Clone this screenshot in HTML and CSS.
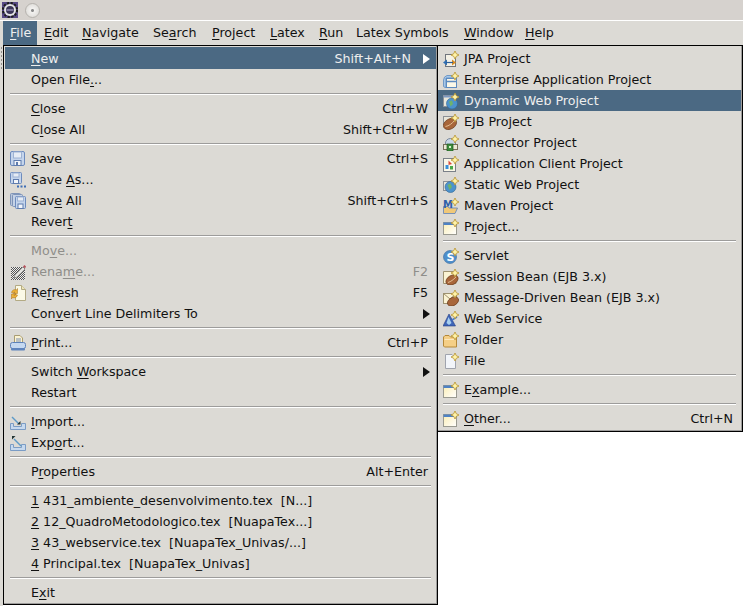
FILE: index.html
```html
<!DOCTYPE html>
<html lang="en">
<head>
    <meta charset="UTF-8">
    <title>File menu</title>
    <link rel="stylesheet" href="styles.css">
</head>
<body>
    <svg class="defs" xmlns="http://www.w3.org/2000/svg">
        <defs>
            <pattern id="dither" width="2" height="2" patternUnits="userSpaceOnUse">
                <rect width="2" height="2" fill="#eee"/>
                <rect width="1" height="1" fill="#555"/>
                <rect x="1" y="1" width="1" height="1" fill="#555"/>
            </pattern>
            <linearGradient id="pale" x1="0" y1="0" x2="1" y2="1">
                <stop offset="0" stop-color="#fbeeb4"/>
                <stop offset="1" stop-color="#ffffff"/>
            </linearGradient>
            <symbol id="star" viewBox="0 0 16 16">
                <path d="M12 0 L13.300 2.700 L16 4 L13.300 5.300 L12 8 L10.700 5.300 L8 4 L10.700 2.700 Z" fill="#fff3a8" stroke="#b8922e" stroke-width=".8"/>
            </symbol>
            <symbol id="win" viewBox="0 0 16 16">
                <rect x=".5" y="3.500" width="13" height="12" fill="url(#pale)" stroke="#9a9a90"/>
                <rect x=".5" y="3.500" width="13" height="2.500" fill="#4f82c4"/>
                <use href="#star"/>
            </symbol>
            <symbol id="save" viewBox="0 0 16 16">
                <rect x=".5" y=".5" width="14" height="14" rx="1.500" fill="#c5d5ec" stroke="#6d8bbd"/>
                <rect x="3.500" y="1" width="8" height="6" fill="#e6ecf5" stroke="#9db2d3"/>
                <rect x="4" y="9.500" width="7" height="5" fill="#f2f5fa" stroke="#5f7cae"/>
                <rect x="6" y="11" width="2" height="3" fill="#5f7cae"/>
            </symbol>
            <symbol id="saveas" viewBox="0 0 16 16">
                <rect x=".5" y=".5" width="11" height="11" rx="1" fill="#c5d5ec" stroke="#6d8bbd"/>
                <rect x="3" y="1" width="6" height="4" fill="#e6ecf5" stroke="#9db2d3"/>
                <rect x="3.500" y="7.500" width="5" height="4" fill="#f2f5fa" stroke="#5f7cae"/>
                <path d="M7 13.500h2v2H7zM10.500 13.500h2v2h-2zM14 13.500h2v2h-2z" fill="#3d6db5"/>
            </symbol>
            <symbol id="saveall" viewBox="0 0 16 16">
                <rect x=".5" y=".5" width="10" height="12" rx="1" fill="#b9c6da" stroke="#7f94b8"/>
                <rect x="2.500" y="1.500" width="10" height="12" rx="1" fill="#c5d2e6" stroke="#7f94b8"/>
                <rect x="5.500" y="3.500" width="10" height="12" rx="1" fill="#c5d5ec" stroke="#6d8bbd"/>
                <rect x="7.500" y="4" width="6" height="4" fill="#e6ecf5" stroke="#9db2d3"/>
                <rect x="8" y="11" width="5" height="4.500" fill="#f2f5fa" stroke="#5f7cae"/>
            </symbol>
            <symbol id="rename" viewBox="0 0 16 16">
                <rect x="1" y="3" width="14" height="13" fill="url(#dither)"/>
                <path d="M5 11 L13 3 L15 5 L7 13 L4 14 Z" fill="#e4e4e0" stroke="#777" stroke-width=".7"/>
                <path d="M13 2.500 L14.500 1 L16 2.500 L15 4.500 Z" fill="#b5505a"/>
            </symbol>
            <symbol id="refresh" viewBox="0 0 16 16">
                <path d="M5.500 .5 H11.500 L15.500 4.500 V15.500 H5.500 Z" fill="#fbf9e6" stroke="#b3aa84"/>
                <path d="M11.500 .5 V4.500 H15.500" fill="#efe6b8" stroke="#b3aa84"/>
                <path d="M1.500 7.500 A3.500 3.500 0 0 1 6.500 5 L7.500 3.500 V8.500 H3.500 L5 7 A1.500 1.500 0 0 0 3.500 8 Z" fill="#edb23a" stroke="#a8701a" stroke-width=".5"/>
                <path d="M7.500 10 A3.500 3.500 0 0 1 2.500 12.500 L1.500 14 V9 H5.500 L4 10.500 A1.500 1.500 0 0 0 5.500 9.500 Z" fill="#edb23a" stroke="#a8701a" stroke-width=".5"/>
            </symbol>
            <symbol id="print" viewBox="0 0 16 16">
                <path d="M4.500 .5 H10 L12.500 3 V8 H4.500 Z" fill="#fbf3d2" stroke="#a99c72"/>
                <path d="M6 4h5M6 6h5" stroke="#7d8fb0"/>
                <rect x=".5" y="7.500" width="15" height="6" rx="2" fill="#c5d8f0" stroke="#5d82ba"/>
                <rect x="1" y="13" width="14" height="2.500" rx="1" fill="#5f84bd"/>
            </symbol>
            <symbol id="import" viewBox="0 0 16 16">
                <path d="M.5 9.500 H3.500 V12.500 H11.500 V9.500 H15.500 V15.500 H.5 Z" fill="#c7d9ee" stroke="#7b9cc5"/>
                <path d="M2 3 L9 10" stroke="#5d9ac8" stroke-width="1.400"/>
                <path d="M7 10.500 H10.500 V7 Z" fill="#233"/>
            </symbol>
            <symbol id="export" viewBox="0 0 16 16">
                <path d="M.5 9.500 H3.500 V12.500 H11.500 V9.500 H15.500 V15.500 H.5 Z" fill="#c7d9ee" stroke="#7b9cc5"/>
                <path d="M4 4 L11 11" stroke="#5d9ac8" stroke-width="1.400"/>
                <path d="M2 1 H5.500 L2 4.500 Z" fill="#233"/>
            </symbol>
            <symbol id="jpa" viewBox="0 0 16 16">
                <rect x="2.500" y="3.500" width="10" height="12" fill="#f4f1e6" stroke="#70757c"/>
                <path d="M0 11.500 L4 8.500 V14.500 Z" fill="#2f6fb5"/>
                <path d="M13 11.500 L9 8.500 V14.500 Z" fill="#d68a20"/>
                <path d="M3 11.500 H10" stroke="#2f5f95" stroke-width="1.200"/>
                <use href="#star"/>
            </symbol>
            <symbol id="ear" viewBox="0 0 16 16">
                <path d="M.5 8 A5 5 0 0 1 4 3.500 H13.500 V6 H3 V15.500 H2 A2 2 0 0 1 .5 13 Z" fill="#a8c8e8" stroke="#5d8bc0" stroke-width=".8"/>
                <rect x="3.500" y="6.500" width="10" height="9" fill="#fbf8e8" stroke="#5d8bc0"/>
                <path d="M3.500 9.500 H13.500" stroke="#5d8bc0" stroke-width="1.500"/>
                <use href="#star"/>
            </symbol>
            <symbol id="dyn" viewBox="0 0 16 16">
                <rect x=".5" y="2.500" width="12" height="11" fill="#e8e6da" stroke="#8c9096"/>
                <rect x=".5" y="2.500" width="12" height="2" fill="#7d98c0"/>
                <circle cx="9" cy="10.500" r="5.500" fill="#4d93cc" stroke="#2f6596" stroke-width=".6"/>
                <path d="M6 8.500 L9 7.500 L10 11 L7.500 13.500 Z" fill="#6fb36b"/>
                <use href="#star"/>
            </symbol>
            <symbol id="ejb" viewBox="0 0 16 16">
                <rect x=".5" y="2.500" width="10" height="8" fill="#e8e6da" stroke="#8c9096"/>
                <ellipse cx="7" cy="10" rx="7" ry="5" transform="rotate(-30 7 10)" fill="#a8663a" stroke="#6c3d1e" stroke-width=".7"/>
                <path d="M2.500 12.500 C6 12 9 9.500 11.500 6.500" stroke="#e3bd92" fill="none"/>
                <use href="#star"/>
            </symbol>
            <symbol id="conn" viewBox="0 0 16 16">
                <path d="M2.500 8 A5 4.500 0 0 1 12.500 8 V9.500 H2.500 Z" fill="#c8d6e6" stroke="#77879c"/>
                <rect x=".5" y="9.500" width="14" height="5" fill="#ece8d5" stroke="#77705a"/>
                <rect x="4" y="9" width="6" height="7" fill="#3e8c3e" stroke="#1e5a1e" stroke-width=".7"/>
                <rect x="6" y="11" width="2" height="2" fill="#d8f0c8"/>
                <use href="#star"/>
            </symbol>
            <symbol id="client" viewBox="0 0 16 16">
                <rect x=".5" y="2.500" width="12" height="13" fill="#faf7e8" stroke="#7a8088"/>
                <path d="M5.500 4.500 L9 8 L5.500 9 Z" fill="#d94a3a"/>
                <rect x="2.500" y="9" width="3" height="4" fill="#3a8fd8"/>
                <rect x="7" y="10" width="3" height="3.500" fill="#48a848"/>
                <use href="#star"/>
            </symbol>
            <symbol id="staticweb" viewBox="0 0 16 16">
                <rect x=".5" y="4.500" width="8" height="9" fill="#e8e6da" stroke="#8c9096"/>
                <circle cx="7.500" cy="10" r="5.500" fill="#4d93cc" stroke="#2f6596" stroke-width=".6"/>
                <path d="M4.500 8 L7.500 6.500 L9 10 L6.500 13 Z" fill="#6fb36b"/>
                <use href="#star"/>
            </symbol>
            <symbol id="maven" viewBox="0 0 16 16">
                <path d="M.5 8.500 H5 L6 10 H14.500 L12 15.500 H.5 Z" fill="#f0c878" stroke="#5d82ba" stroke-width=".8"/>
                <text x="0" y="9.500" class="icon-m">M</text>
                <use href="#star"/>
            </symbol>
            <symbol id="servlet" viewBox="0 0 16 16">
                <circle cx="7" cy="9" r="6.500" fill="#4f8fcb" stroke="#34689e" stroke-width=".6"/>
                <text x="3.500" y="13" class="icon-s">S</text>
                <use href="#star"/>
            </symbol>
            <symbol id="session" viewBox="0 0 16 16">
                <path d="M.5 2.500 H10 L13 5.500 V14.500 H.5 Z" fill="#fbf3d2" stroke="#9e9270"/>
                <ellipse cx="9" cy="11" rx="6.500" ry="4.500" transform="rotate(-30 9 11)" fill="#a8663a" stroke="#6c3d1e" stroke-width=".7"/>
                <path d="M5 13.500 C8 12.500 10 11 13 8" stroke="#e3bd92" fill="none"/>
                <use href="#star"/>
            </symbol>
            <symbol id="mdb" viewBox="0 0 16 16">
                <rect x=".5" y="3.500" width="13" height="10" fill="#fbf3d2" stroke="#9e9270"/>
                <path d="M.5 3.500 L7 9 L13.500 3.500" fill="none" stroke="#9e9270"/>
                <ellipse cx="10" cy="11.500" rx="6" ry="4" transform="rotate(-30 10 11.500)" fill="#a8663a" stroke="#6c3d1e" stroke-width=".7"/>
                <use href="#star"/>
            </symbol>
            <symbol id="ws" viewBox="0 0 16 16">
                <path d="M0 15 L6 3 L12.500 15 Z" fill="#3f66b8" stroke="#263f85" stroke-width=".6"/>
                <path d="M5.500 6 L8.500 12 L6 14 L3.500 12 Z" fill="#a8d0f0"/>
                <path d="M9 9 L14 6" stroke="#4d7cc8" stroke-width="1.500"/>
                <use href="#star"/>
            </symbol>
            <symbol id="folder" viewBox="0 0 16 16">
                <path d="M.5 5 L2 3.500 H6 L7.500 5 H13.500 V15 H1.500 L.5 14 Z" fill="#f5cf86" stroke="#b5893a"/>
                <path d="M1.500 7.500 H13" stroke="#fbe8bf"/>
                <use href="#star"/>
            </symbol>
            <symbol id="newfile" viewBox="0 0 16 16">
                <path d="M2.500 1.500 H9 L12.500 5 V15.500 H2.500 Z" fill="#f2f5fa" stroke="#a0a4ae"/>
                <use href="#star"/>
            </symbol>
        </defs>
    </svg>

    <div class="titlebar">
        <svg class="appicon" viewBox="0 0 16 16">
            <rect width="16" height="16" fill="#584a86"/>
            <circle cx="8" cy="8" r="6.800" fill="none" stroke="#1c1c1c" stroke-width="2.600" stroke-dasharray="2.200 1.400"/>
            <circle cx="8" cy="8" r="6" fill="#e4e4e4"/>
            <circle cx="8" cy="8" r="4" fill="#3c3658"/>
            <rect x="4.500" y="7.400" width="7" height="1.200" fill="#a8a0c8"/>
        </svg>
        <span class="winbtn"></span>
    </div>

    <nav class="menubar">
        <span class="top current"><u>F</u>ile</span>
        <span class="top"><u>E</u>dit</span>
        <span class="top"><u>N</u>avigate</span>
        <span class="top">Se<u>a</u>rch</span>
        <span class="top"><u>P</u>roject</span>
        <span class="top"><u>L</u>atex</span>
        <span class="top"><u>R</u>un</span>
        <span class="top">Latex Symbols</span>
        <span class="top"><u>W</u>indow</span>
        <span class="top"><u>H</u>elp</span>
    </nav>

    <main class="stage">
        <div class="grip"></div>
        <div class="menu file-menu">
            <div class="item on"><span class="ico"></span><span><u>N</u>ew</span><span class="key key-sub">Shift+Alt+N</span><i class="arrow"></i></div>
            <div class="item"><span class="ico"></span><span>Open File<u>.</u>..</span></div>
            <div class="sep"></div>
            <div class="item"><span class="ico"></span><span><u>C</u>lose</span><span class="key">Ctrl+W</span></div>
            <div class="item"><span class="ico"></span><span>C<u>l</u>ose All</span><span class="key">Shift+Ctrl+W</span></div>
            <div class="sep"></div>
            <div class="item"><svg class="ico"><use href="#save"/></svg><span><u>S</u>ave</span><span class="key">Ctrl+S</span></div>
            <div class="item"><svg class="ico"><use href="#saveas"/></svg><span>Save <u>A</u>s...</span></div>
            <div class="item"><svg class="ico"><use href="#saveall"/></svg><span>Sav<u>e</u> All</span><span class="key">Shift+Ctrl+S</span></div>
            <div class="item"><span class="ico"></span><span>Rever<u>t</u></span></div>
            <div class="sep"></div>
            <div class="item off"><span class="ico"></span><span>Mo<u>v</u>e...</span></div>
            <div class="item off"><svg class="ico"><use href="#rename"/></svg><span>Rena<u>m</u>e...</span><span class="key">F2</span></div>
            <div class="item"><svg class="ico"><use href="#refresh"/></svg><span>Re<u>f</u>resh</span><span class="key">F5</span></div>
            <div class="item"><span class="ico"></span><span>Con<u>v</u>ert Line Delimiters To</span><i class="arrow push"></i></div>
            <div class="sep"></div>
            <div class="item"><svg class="ico"><use href="#print"/></svg><span><u>P</u>rint...</span><span class="key">Ctrl+P</span></div>
            <div class="sep"></div>
            <div class="item"><span class="ico"></span><span>Switch <u>W</u>orkspace</span><i class="arrow push"></i></div>
            <div class="item"><span class="ico"></span><span>Restart</span></div>
            <div class="sep"></div>
            <div class="item"><svg class="ico"><use href="#import"/></svg><span><u>I</u>mport...</span></div>
            <div class="item"><svg class="ico"><use href="#export"/></svg><span>Exp<u>o</u>rt...</span></div>
            <div class="sep"></div>
            <div class="item"><span class="ico"></span><span>P<u>r</u>operties</span><span class="key">Alt+Enter</span></div>
            <div class="sep"></div>
            <div class="item"><span class="ico"></span><span><u>1</u> 431_ambiente_desenvolvimento.tex  [N...]</span></div>
            <div class="item"><span class="ico"></span><span><u>2</u> 12_QuadroMetodologico.tex  [NuapaTex...]</span></div>
            <div class="item"><span class="ico"></span><span><u>3</u> 43_webservice.tex  [NuapaTex_Univas/...]</span></div>
            <div class="item"><span class="ico"></span><span><u>4</u> Principal.tex  [NuapaTex_Univas]</span></div>
            <div class="sep"></div>
            <div class="item"><span class="ico"></span><span>E<u>x</u>it</span></div>
        </div>

        <div class="menu new-menu">
            <div class="item"><svg class="ico"><use href="#jpa"/></svg><span>JPA Project</span></div>
            <div class="item"><svg class="ico"><use href="#ear"/></svg><span>Enterprise Application Project</span></div>
            <div class="item on"><svg class="ico"><use href="#dyn"/></svg><span>Dynamic Web Project</span></div>
            <div class="item"><svg class="ico"><use href="#ejb"/></svg><span>EJB Project</span></div>
            <div class="item"><svg class="ico"><use href="#conn"/></svg><span>Connector Project</span></div>
            <div class="item"><svg class="ico"><use href="#client"/></svg><span>Application Client Project</span></div>
            <div class="item"><svg class="ico"><use href="#staticweb"/></svg><span>Static Web Project</span></div>
            <div class="item"><svg class="ico"><use href="#maven"/></svg><span>Maven Project</span></div>
            <div class="item"><svg class="ico"><use href="#win"/></svg><span>P<u>r</u>oject...</span></div>
            <div class="sep"></div>
            <div class="item"><svg class="ico"><use href="#servlet"/></svg><span>Servlet</span></div>
            <div class="item"><svg class="ico"><use href="#session"/></svg><span>Session Bean (EJB 3.x)</span></div>
            <div class="item"><svg class="ico"><use href="#mdb"/></svg><span>Message-Driven Bean (EJB 3.x)</span></div>
            <div class="item"><svg class="ico"><use href="#ws"/></svg><span>Web Service</span></div>
            <div class="item"><svg class="ico"><use href="#folder"/></svg><span>Folder</span></div>
            <div class="item"><svg class="ico"><use href="#newfile"/></svg><span>File</span></div>
            <div class="sep"></div>
            <div class="item"><svg class="ico"><use href="#win"/></svg><span>E<u>x</u>ample...</span></div>
            <div class="sep"></div>
            <div class="item"><svg class="ico"><use href="#win"/></svg><span><u>O</u>ther...</span><span class="key">Ctrl+N</span></div>
        </div>
    </main>
</body>
</html>
```

FILE: styles.css
```css
html, body{
    margin: 0;
    height: 100%;
    overflow: hidden;
}
body{
    display: flex;
    flex-direction: column;
    background-color: white;
    color: #111;
    font-family: "DejaVu Sans", sans-serif;
    font-size: 12.67px;
}
u{
    text-decoration-thickness: 1px;
    text-underline-offset: 2px;
    text-decoration-skip-ink: none;
}
.defs{
    position: absolute;
    width: 0;
    height: 0;
}
.icon-m{
    font-family: "DejaVu Sans", sans-serif;
    font-size: 10px;
    font-weight: bold;
    fill: #2f5fa8;
}
.icon-s{
    font-family: "DejaVu Sans", sans-serif;
    font-size: 11px;
    font-weight: bold;
    fill: white;
}

.titlebar{
    height: 20px;
    flex: none;
    display: flex;
    align-items: center;
    gap: 7px;
    padding-left: 2px;
    background-color: #d6d2ce;
    border-bottom: 1px solid white;
}
.appicon{
    width: 16px;
    height: 16px;
}
.winbtn{
    box-sizing: border-box;
    width: 15px;
    height: 15px;
    border: 1px solid #b5b2ad;
    border-radius: 50%;
    background: radial-gradient(circle, #8a8a8a 0 1px, #f2f1ef 2px, #d8d6d2 100%);
}

.menubar{
    height: 24px;
    flex: none;
    display: grid;
    grid-template-columns: 34px 38px 71px 59px 58px 49px 37px 108px 61px 50px;
    padding-left: 3px;
    background-color: #dcdad5;
}
.top{
    padding-left: 7px;
    line-height: 24px;
    white-space: nowrap;
}
.top.current{
    background-color: #4b6983;
    color: #eee;
}

.stage{
    position: relative;
    flex: 1;
    border-left: 3px solid #dcdad5;
}
.grip{
    position: absolute;
    left: -2px;
    top: 2px;
    width: 1px;
    height: 24px;
    background: repeating-linear-gradient(#8f8e8a 0 2px, transparent 2px 4px);
}
.menu{
    position: absolute;
    top: 0;
    box-sizing: border-box;
    border: 1px solid black;
    padding: 2px 1px 1px 1px;
    background-color: #dcdad5;
    box-shadow: inset -1px -1px 0 #9d9c9b;
}
.file-menu{
    left: 0;
    width: 435px;
    height: 560px;
}
.new-menu{
    left: 434px;
    width: 306px;
    height: 387px;
    padding-left: 0;
}
.item{
    height: 21px;
    display: flex;
    align-items: center;
    white-space: pre;
}
.ico{
    width: 16px;
    height: 16px;
    flex: none;
    margin: 0 5px;
}
.item.on{
    background-color: #4b6983;
    color: #eee;
}
.file-menu .item.on{
    box-shadow: 0 -1px 0 #4b6983;
}
.item.off{
    color: #8f8e8a;
}
.key{
    margin-left: auto;
    padding-right: 8px;
}
.key-sub{
    padding-right: 0;
}
.arrow{
    flex: none;
    margin: 0 6px 0 12px;
    border-left: 7px solid #111;
    border-top: 5px solid transparent;
    border-bottom: 5px solid transparent;
}
.arrow.push{
    margin-left: auto;
}
.item.on .arrow{
    border-left-color: white;
}
.sep{
    height: 8px;
    box-sizing: border-box;
    margin: 0 5px;
    padding-top: 3px;
}
.sep::before{
    content: "";
    display: block;
    height: 1px;
    background-color: #9d9c9b;
    border-bottom: 1px solid white;
}
```
